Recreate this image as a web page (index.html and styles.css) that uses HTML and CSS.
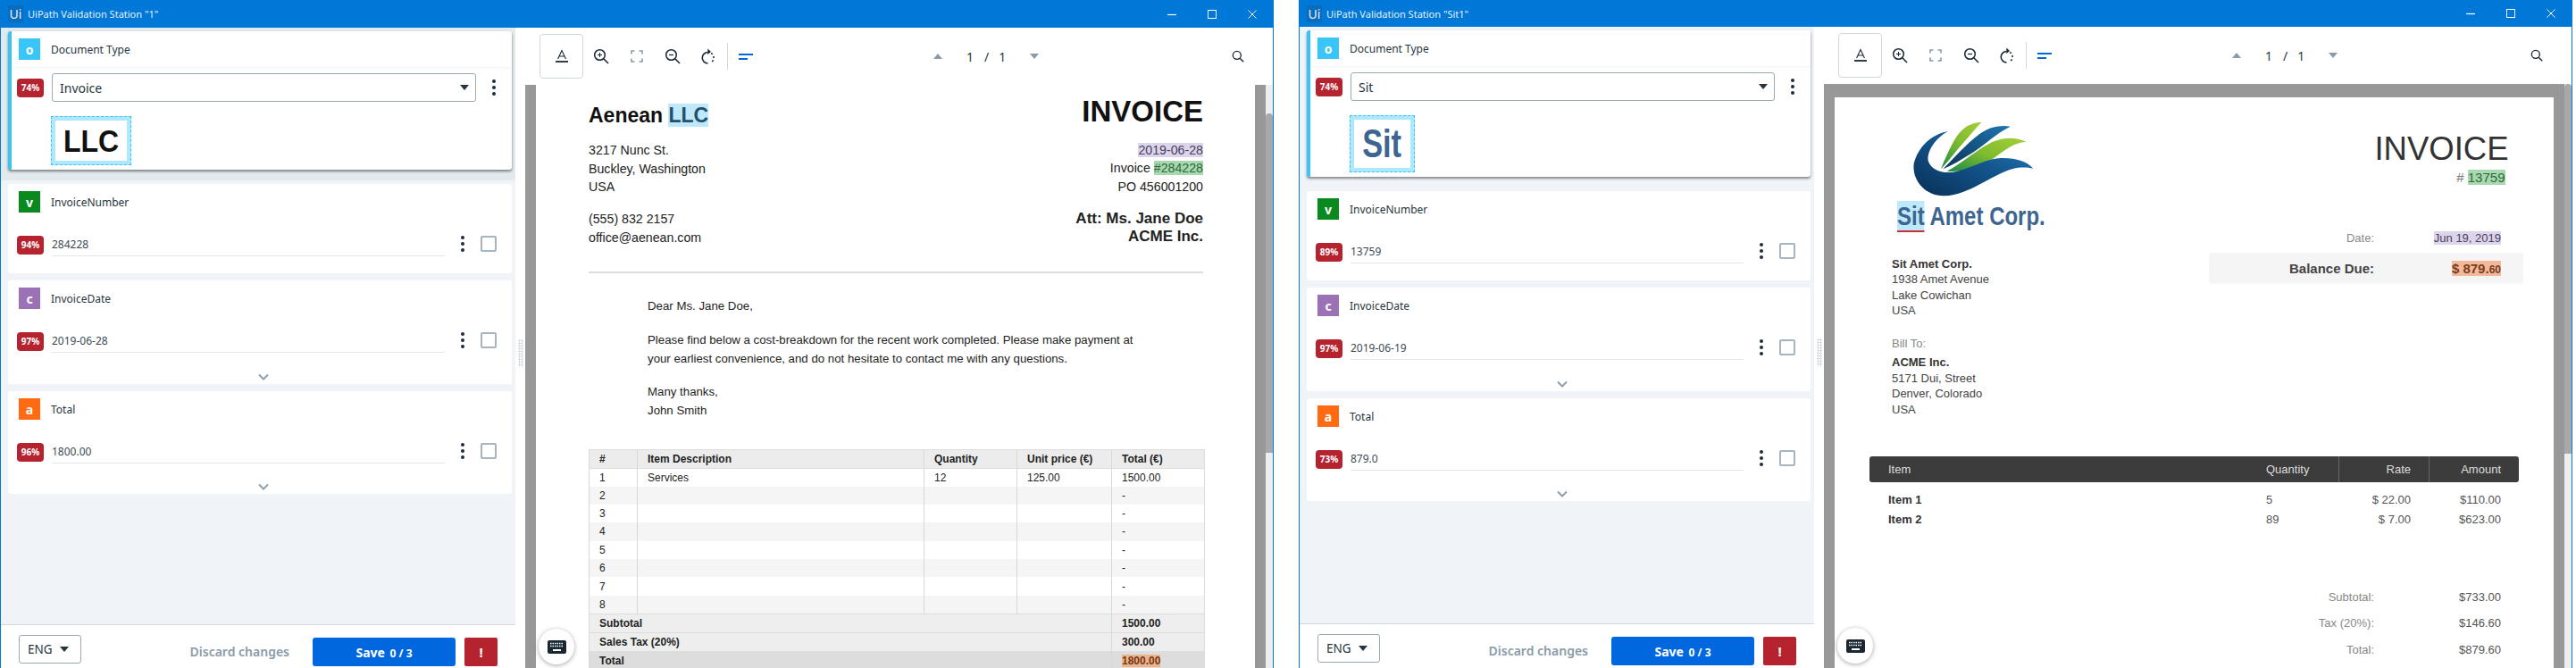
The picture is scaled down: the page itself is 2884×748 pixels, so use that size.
FILE: index.html
```html
<!DOCTYPE html>
<html lang="en">
<head>
<meta charset="utf-8">
<title>UiPath Validation Station</title>
<link rel="stylesheet" href="styles.css">
</head>
<body>
<svg class="defs" aria-hidden="true">
  <symbol id="i-a" viewBox="0 0 16 16"><path d="M3.6 11 8 1.5 12.4 11M5 8h6" fill="none" stroke="#1a2733" stroke-width="1.1"/><path d="M1 14h14" stroke="#1a2733" stroke-width="1.8"/></symbol>
  <symbol id="i-zoomin" viewBox="0 0 18 18"><circle cx="7.5" cy="7.5" r="5.8" fill="none" stroke="#1a2733" stroke-width="1.5"/><path d="M11.8 11.8 17 17" stroke="#1a2733" stroke-width="1.6"/><path d="M5 7.5h5M7.5 5v5" stroke="#1a2733" stroke-width="1"/></symbol>
  <symbol id="i-zoomout" viewBox="0 0 18 18"><circle cx="7.5" cy="7.5" r="5.8" fill="none" stroke="#1a2733" stroke-width="1.5"/><path d="M11.8 11.8 17 17" stroke="#1a2733" stroke-width="1.6"/><path d="M5 7.5h5" stroke="#1a2733" stroke-width="1.2"/></symbol>
  <symbol id="i-search" viewBox="0 0 18 18"><circle cx="7.5" cy="7.5" r="5.8" fill="none" stroke="#1a2733" stroke-width="1.7"/><path d="M11.8 11.8 17 17" stroke="#1a2733" stroke-width="1.8"/></symbol>
  <symbol id="i-fit" viewBox="0 0 14 14"><path d="M1 4.5V1h3.5M9.5 1H13v3.5M13 9.500V13H9.500M4.500 13H1V9.500" fill="none" stroke="#8a9ba8" stroke-width="1.6"/></symbol>
  <symbol id="i-rotate" viewBox="0 0 18 18"><path d="M8.500 4.500A6.200 6.200 0 0 0 8.500 17" fill="none" stroke="#1a2733" stroke-width="1.6"/><path d="M8.300 0.500 12 4 8.300 7z" fill="#1a2733"/><path d="M12.200 5.500A6.200 6.200 0 0 1 11.500 16.300" fill="none" stroke="#1a2733" stroke-width="1.6" stroke-dasharray="2 2.400"/></symbol>
  <symbol id="i-lines" viewBox="0 0 16 7"><path d="M0 1h16M0 6h10" stroke="#0067df" stroke-width="2"/></symbol>
  <symbol id="i-chev" viewBox="0 0 12 8"><path d="M1 1.500 6 6.500 11 1.500" fill="none" stroke="#8fa0ac" stroke-width="2"/></symbol>
  <symbol id="i-kbd" viewBox="0 0 21 15"><rect width="21" height="15" rx="2" fill="#1a2733"/><path d="M3 3.500h15M3 6.500h15" stroke="#fff" stroke-width="1.500" stroke-dasharray="1.500 1"/><path d="M6 11h9" stroke="#fff" stroke-width="2"/></symbol>
  <symbol id="i-min" viewBox="0 0 10 10"><path d="M0 5.500h10" stroke="#fff" stroke-width="1.200"/></symbol>
  <symbol id="i-max" viewBox="0 0 10 10"><rect x=".5" y=".5" width="9" height="9" fill="none" stroke="#fff"/></symbol>
  <symbol id="i-close" viewBox="0 0 10 10"><path d="M.5.500l9 9M9.500.500l-9 9" stroke="#fff"/></symbol>
</svg>

<div class="desktop">

<section class="win win-a">
  <header class="titlebar">
    <span class="ui-logo">Ui</span>
    <span class="win-title">UiPath Validation Station "1"</span>
    <span class="win-controls">
      <svg class="ctl"><use href="#i-min"/></svg>
      <svg class="ctl"><use href="#i-max"/></svg>
      <svg class="ctl"><use href="#i-close"/></svg>
    </span>
  </header>
  <div class="main">
    <aside class="panel">
      <div class="panel-scroll">
        <div class="active-zone">
          <div class="card card-active">
            <div class="field-head head-active"><span class="tag tag-o">o</span><span class="field-name">Document Type</span></div>
            <div class="active-body">
              <div class="select-row">
                <span class="badge">74%</span>
                <div class="select"><span>Invoice</span><i class="caret"></i></div>
                <span class="kebab-slot"><span class="kebab"><i></i><i></i><i></i></span></span>
              </div>
              <div class="crop crop-llc"><div class="crop-inner"><span class="llc">LLC</span></div></div>
            </div>
          </div>
        </div>
        <div class="cards">
          <div class="card card-plain">
            <div class="field-head"><span class="tag tag-v">v</span><span class="field-name">InvoiceNumber</span></div>
            <div class="field-row"><span class="badge">94%</span><span class="value">284228</span><span class="kebab-slot"><span class="kebab"><i></i><i></i><i></i></span></span><span class="check"></span></div>
          </div>
          <div class="card card-plain">
            <div class="field-head"><span class="tag tag-c">c</span><span class="field-name">InvoiceDate</span></div>
            <div class="field-row"><span class="badge">97%</span><span class="value">2019-06-28</span><span class="kebab-slot"><span class="kebab"><i></i><i></i><i></i></span></span><span class="check"></span></div>
            <svg class="chev"><use href="#i-chev"/></svg>
          </div>
          <div class="card card-plain">
            <div class="field-head"><span class="tag tag-a">a</span><span class="field-name">Total</span></div>
            <div class="field-row"><span class="badge">96%</span><span class="value">1800.00</span><span class="kebab-slot"><span class="kebab"><i></i><i></i><i></i></span></span><span class="check"></span></div>
            <svg class="chev"><use href="#i-chev"/></svg>
          </div>
        </div>
      </div>
      <footer class="panel-foot">
        <div class="lang"><span>ENG</span><i class="caret"></i></div>
        <span class="discard">Discard changes</span>
        <button class="save">Save <small>0 / 3</small></button>
        <button class="alert">!</button>
      </footer>
    </aside>
    <div class="handle"><i class="grip"></i></div>
    <div class="viewer">
      <div class="toolbar">
        <span class="tool-on"><svg class="ico-a"><use href="#i-a"/></svg></span>
        <span class="tool"><svg class="ico"><use href="#i-zoomin"/></svg></span>
        <span class="tool"><svg class="ico-fit"><use href="#i-fit"/></svg></span>
        <span class="tool"><svg class="ico"><use href="#i-zoomout"/></svg></span>
        <span class="tool"><svg class="ico"><use href="#i-rotate"/></svg></span>
        <i class="sep"></i>
        <svg class="ico-lines"><use href="#i-lines"/></svg>
        <div class="pager"><i class="arr-up"></i><span class="pg-a">1</span><span class="pg-b">/</span><span class="pg-c">1</span><i class="arr-down"></i></div>
        <svg class="ico-search"><use href="#i-search"/></svg>
      </div>
      <div class="docview">
        <div class="gutter">
          <article class="page page-acme">
            <div class="acme-top">
              <div>
                <div class="acme-name">Aenean <mark class="hl-blue">LLC</mark></div>
                <p class="acme-lines">3217 Nunc St.<br>Buckley, Washington<br>USA</p>
                <p class="acme-lines acme-gap">(555) 832 2157<br>office@aenean.com</p>
              </div>
              <div class="acme-right">
                <div class="acme-inv">INVOICE</div>
                <p class="acme-lines acme-gap-r"><mark class="hl-purple">2019-06-28</mark><br>Invoice <mark class="hl-green">#284228</mark><br>PO 456001200</p>
                <p class="acme-att">Att: Ms. Jane Doe<br>ACME Inc.</p>
              </div>
            </div>
            <hr class="acme-hr">
            <div class="letter">
              <p>Dear Ms. Jane Doe,</p>
              <p class="letter-b">Please find below a cost-breakdown for the recent work completed. Please make payment at<br>your earliest convenience, and do not hesitate to contact me with any questions.</p>
              <p class="letter-c">Many thanks,<br>John Smith</p>
            </div>
            <table class="acme-table">
              <colgroup><col class="c1"><col class="c2"><col class="c3"><col class="c4"><col class="c5"></colgroup>
              <thead><tr><th>#</th><th>Item Description</th><th>Quantity</th><th>Unit price (€)</th><th>Total (€)</th></tr></thead>
              <tbody>
                <tr><td>1</td><td>Services</td><td>12</td><td>125.00</td><td>1500.00</td></tr>
                <tr><td>2</td><td></td><td></td><td></td><td>-</td></tr>
                <tr><td>3</td><td></td><td></td><td></td><td>-</td></tr>
                <tr><td>4</td><td></td><td></td><td></td><td>-</td></tr>
                <tr><td>5</td><td></td><td></td><td></td><td>-</td></tr>
                <tr><td>6</td><td></td><td></td><td></td><td>-</td></tr>
                <tr><td>7</td><td></td><td></td><td></td><td>-</td></tr>
                <tr><td>8</td><td></td><td></td><td></td><td>-</td></tr>
              </tbody>
              <tfoot>
                <tr><th colspan="4">Subtotal</th><th>1500.00</th></tr>
                <tr><th colspan="4">Sales Tax (20%)</th><th>300.00</th></tr>
                <tr class="grand"><th colspan="4">Total</th><th><mark class="hl-orange">1800.00</mark></th></tr>
              </tfoot>
            </table>
          </article>
        </div>
        <div class="sbar"><i class="thumb thumb-a"></i></div>
        <button class="kbd"><svg class="kbd-ico"><use href="#i-kbd"/></svg></button>
      </div>
    </div>
  </div>
</section>

<section class="win win-b">
  <header class="titlebar">
    <span class="ui-logo">Ui</span>
    <span class="win-title">UiPath Validation Station "Sit1"</span>
    <span class="win-controls">
      <svg class="ctl"><use href="#i-min"/></svg>
      <svg class="ctl"><use href="#i-max"/></svg>
      <svg class="ctl"><use href="#i-close"/></svg>
    </span>
  </header>
  <div class="main">
    <aside class="panel">
      <div class="panel-scroll">
        <div class="active-zone">
          <div class="card card-active">
            <div class="field-head head-active"><span class="tag tag-o">o</span><span class="field-name">Document Type</span></div>
            <div class="active-body">
              <div class="select-row">
                <span class="badge">74%</span>
                <div class="select"><span>Sit</span><i class="caret"></i></div>
                <span class="kebab-slot"><span class="kebab"><i></i><i></i><i></i></span></span>
              </div>
              <div class="crop crop-sit"><div class="crop-inner"><span class="sit">Sit</span></div></div>
            </div>
          </div>
        </div>
        <div class="cards">
          <div class="card card-plain">
            <div class="field-head"><span class="tag tag-v">v</span><span class="field-name">InvoiceNumber</span></div>
            <div class="field-row"><span class="badge">89%</span><span class="value">13759</span><span class="kebab-slot"><span class="kebab"><i></i><i></i><i></i></span></span><span class="check"></span></div>
          </div>
          <div class="card card-plain">
            <div class="field-head"><span class="tag tag-c">c</span><span class="field-name">InvoiceDate</span></div>
            <div class="field-row"><span class="badge">97%</span><span class="value">2019-06-19</span><span class="kebab-slot"><span class="kebab"><i></i><i></i><i></i></span></span><span class="check"></span></div>
            <svg class="chev"><use href="#i-chev"/></svg>
          </div>
          <div class="card card-plain">
            <div class="field-head"><span class="tag tag-a">a</span><span class="field-name">Total</span></div>
            <div class="field-row"><span class="badge">73%</span><span class="value">879.0</span><span class="kebab-slot"><span class="kebab"><i></i><i></i><i></i></span></span><span class="check"></span></div>
            <svg class="chev"><use href="#i-chev"/></svg>
          </div>
        </div>
      </div>
      <footer class="panel-foot">
        <div class="lang"><span>ENG</span><i class="caret"></i></div>
        <span class="discard">Discard changes</span>
        <button class="save">Save <small>0 / 3</small></button>
        <button class="alert">!</button>
      </footer>
    </aside>
    <div class="handle"><i class="grip"></i></div>
    <div class="viewer">
      <div class="toolbar">
        <span class="tool-on"><svg class="ico-a"><use href="#i-a"/></svg></span>
        <span class="tool"><svg class="ico"><use href="#i-zoomin"/></svg></span>
        <span class="tool"><svg class="ico-fit"><use href="#i-fit"/></svg></span>
        <span class="tool"><svg class="ico"><use href="#i-zoomout"/></svg></span>
        <span class="tool"><svg class="ico"><use href="#i-rotate"/></svg></span>
        <i class="sep"></i>
        <svg class="ico-lines"><use href="#i-lines"/></svg>
        <div class="pager"><i class="arr-up"></i><span class="pg-a">1</span><span class="pg-b">/</span><span class="pg-c">1</span><i class="arr-down"></i></div>
        <svg class="ico-search"><use href="#i-search"/></svg>
      </div>
      <div class="docview">
        <div class="gutter gutter-b">
          <article class="page page-sit">
            <div class="sit-top">
              <div class="sit-left">
                <svg class="swoosh" viewBox="155 138 405 252">
                  <defs>
                    <linearGradient id="gBlue" x1="0" y1="1" x2="1" y2="0"><stop offset="0" stop-color="#082f55"/><stop offset=".55" stop-color="#14568f"/><stop offset="1" stop-color="#2184c2"/></linearGradient>
                    <linearGradient id="gGreen" x1="0" y1="1" x2="1" y2="0"><stop offset="0" stop-color="#1d8a4a"/><stop offset=".5" stop-color="#7fbb2e"/><stop offset="1" stop-color="#a5cf3a"/></linearGradient>
                    <linearGradient id="gMid" x1="0" y1="1" x2="1" y2="0"><stop offset="0" stop-color="#0b3358"/><stop offset="1" stop-color="#1f77b0"/></linearGradient>
                  </defs>
                  <path d="M385 140C345 142 320 160 300 190 280 222 262 262 248 298 275 270 300 235 325 208 345 185 365 160 385 140Z" fill="url(#gGreen)"/>
                  <path d="M482 155C440 148 405 160 375 182 335 212 290 262 255 298 300 278 345 250 380 225 415 198 445 172 482 155Z" fill="url(#gMid)"/>
                  <path d="M535 206C490 185 440 195 405 215 360 240 315 280 268 305 325 310 385 290 425 262 460 235 490 210 535 206Z" fill="url(#gGreen)"/>
                  <path d="M272 171C220 180 172 220 157 280 150 335 195 390 260 388 345 385 420 315 490 297 515 290 540 292 558 296 535 270 490 258 440 262 390 268 340 300 290 308 250 314 215 300 205 270 200 235 235 190 272 171Z" fill="url(#gBlue)"/>
                </svg>
                <div class="sit-brand"><mark class="sit-mark">Sit</mark> Amet Corp.</div>
                <p class="sit-addr"><b>Sit Amet Corp.</b><br>1938 Amet Avenue<br>Lake Cowichan<br>USA</p>
                <p class="sit-bill">Bill To:</p>
                <p class="sit-addr-2"><b>ACME Inc.</b><br>5171 Dui, Street<br>Denver, Colorado<br>USA</p>
              </div>
              <div class="sit-right">
                <div class="sit-inv">INVOICE</div>
                <div class="sit-num"># <mark class="hl-green">13759</mark></div>
                <div class="sit-date"><span class="s-label">Date:</span><span class="s-val"><mark class="hl-purple">Jun 19, 2019</mark></span></div>
                <div class="sit-bal"><b class="s-label">Balance Due:</b><b class="s-val"><mark class="hl-peach">$ 879.<small>60</small></mark></b></div>
              </div>
            </div>
            <div class="s-head"><span class="s-h1">Item</span><span>Quantity</span><span class="s-hr">Rate</span><span class="s-hr">Amount</span></div>
            <div class="s-row"><b class="s-c1">Item 1</b><span>5</span><span class="s-r">$ 22.00</span><span class="s-r">$110.00</span></div>
            <div class="s-row"><b class="s-c1">Item 2</b><span>89</span><span class="s-r">$ 7.00</span><span class="s-r">$623.00</span></div>
            <div class="s-tot s-tot-first"><span class="s-tl">Subtotal:</span><span class="s-tv">$733.00</span></div>
            <div class="s-tot"><span class="s-tl">Tax (20%):</span><span class="s-tv">$146.60</span></div>
            <div class="s-tot"><span class="s-tl">Total:</span><span class="s-tv">$879.60</span></div>
          </article>
        </div>
        <div class="sbar"><i class="thumb thumb-b"></i></div>
        <button class="kbd"><svg class="kbd-ico"><use href="#i-kbd"/></svg></button>
      </div>
    </div>
  </div>
</section>

</div>
</body>
</html>
```
FILE: styles.css
```css
* { box-sizing: border-box; }
html, body { margin: 0; height: 748px; overflow: hidden; background: #fff; }
body { font-family: "Noto Sans", sans-serif; color: #273540; }
p { margin: 0; }
mark { color: inherit; background: none; }
button { font-family: inherit; border: 0; padding: 0; }
.defs { display: none; }

.desktop { display: flex; gap: 28px; }
.win { width: 1426px; flex: none; border-left: 1px solid #0078d7; border-right: 1px solid #0078d7; }

/* title bar */
.titlebar { display: flex; align-items: center; background: #0078d7; color: #e4f1fb; font-size: 11px; }
.win-a .titlebar { height: 31px; }
.win-b .titlebar { height: 30px; }
.ui-logo { width: 17px; height: 19px; margin-left: 8px; background: #0a6cbd; color: #e8f3fc; font-size: 14px; line-height: 19px; text-align: center; }
.win-title { margin-left: 5px; }
.win-controls { margin-left: auto; margin-right: 18px; display: flex; gap: 35px; align-items: center; }
.ctl { width: 10px; height: 10px; display: block; }

.main { display: flex; height: 718px; }

/* left panel */
.panel { width: 576px; flex: none; display: flex; flex-direction: column; background: #f0f4f8; }
.panel-scroll { flex: 1; }
.active-zone { padding: 4px 4px 12px 8px; }
.win-a .active-zone { background: #e2eaee; }
.cards { padding: 4px 4px 0 8px; display: flex; flex-direction: column; gap: 8px; }
.card { background: #fff; border-radius: 3px; }
.card-active { border-left: 4px solid #38c6f9; box-shadow: 0 2px 3px rgba(0, 0, 0, .45); }
.card-plain { position: relative; height: 100px; }
.card-plain + .card-plain { height: 116px; }
.card-plain + .card-plain + .card-plain { height: 115px; }

.field-head { display: flex; align-items: center; height: 40px; padding-left: 12px; gap: 12px; }
.head-active { padding-left: 8px; box-shadow: 0 1px 2px rgba(0, 0, 0, .06); }
.tag { width: 24px; height: 24px; flex: none; color: #fff; font-size: 14px; font-weight: 700; line-height: 26px; text-align: center; }
.tag-o { background: #38c6f9; }
.tag-v { background: #0a8a1e; }
.tag-c { background: #9b72b5; }
.tag-a { background: #ff6a13; }
.field-name { font-size: 12px; color: #273540; }

.badge { width: 30px; height: 21px; flex: none; border-radius: 4px; background: #b5232f; color: #fff; font-size: 10px; font-weight: 700; line-height: 21px; text-align: center; }

.active-body { padding: 7px 0 5px 6px; }
.select-row { display: flex; align-items: center; gap: 9px; }
.select { flex: 1; height: 32px; display: flex; align-items: center; justify-content: space-between; padding: 0 7px 0 8px; border: 1px solid #9aaab5; border-radius: 3px; font-size: 14px; }
.select-row .kebab-slot { margin-left: -9px; }
.caret { display: block; width: 0; height: 0; border: 5px solid transparent; border-top: 6px solid #273540; border-bottom: 0; }
.kebab-slot { width: 40px; flex: none; display: flex; justify-content: center; }
.kebab { display: flex; flex-direction: column; gap: 3px; }
.kebab i { display: block; width: 4px; height: 4px; border-radius: 50%; background: #1a2d42; }

.crop { margin: 16px 0 0 38px; border: 1px dashed #38c6f9; padding: 4px; background: #aee8ff; }
.crop-llc { width: 90px; height: 55px; }
.crop-sit { width: 73px; height: 64px; }
.crop-inner { height: 100%; background: #fff; display: flex; align-items: center; justify-content: center; overflow: hidden; }
.llc { display: inline-block; font: 700 32px/1 "Liberation Sans", sans-serif; color: #111; transform: scaleY(1.1); }
.sit { display: inline-block; font: 700 44px/1 "Liberation Sans", sans-serif; color: #3d6590; transform: scaleX(.78); }

.field-row { display: flex; align-items: flex-start; margin-top: 18px; padding: 0 17px 0 10px; }
.value { flex: 1; height: 23px; margin-left: 9px; border-bottom: 1px solid #e3e8ec; font-size: 12px; line-height: 19px; color: #3c4a55; }
.check { width: 18px; height: 18px; flex: none; border: 2px solid #a5b4bf; border-radius: 2px; }
.chev { position: absolute; left: 280px; bottom: 4px; width: 12px; height: 8px; }

.panel-foot { height: 50px; flex: none; display: flex; align-items: flex-start; padding: 0 20px; background: #fff; border-top: 1px solid #cfd8dd; }
.lang { width: 70px; height: 32px; margin-top: 11px; display: flex; align-items: center; gap: 8px; padding-left: 9px; border: 1px solid #9aaab5; border-radius: 3px; font-size: 13.500px; }
.discard { margin: 14px 0 0 auto; font-size: 14px; font-weight: 600; line-height: 32px; color: #8a9ba8; }
.save { width: 160px; height: 32px; margin: 14px 0 0 26px; background: #0067df; border-radius: 3px; color: #fff; font-size: 14px; font-weight: 700; }
.save small { font-size: 12px; margin-left: 2px; }
.alert { width: 37px; height: 32px; margin: 14px 0 0 10px; background: #b5232f; border-radius: 2px; color: #fff; font-size: 15px; font-weight: 700; }

/* handle */
.handle { width: 11px; flex: none; display: flex; align-items: center; justify-content: center; background: #fff; }
.grip { width: 6px; height: 31px; margin-top: 10px; background-image: radial-gradient(#d8dee3 50%, transparent 52%); background-size: 3px 3px; }

/* viewer */
.viewer { flex: 1; min-width: 0; display: flex; flex-direction: column; }
.toolbar { height: 64px; flex: none; display: flex; align-items: center; padding: 0 32px 0 16px; background: #fff; }
.tool-on { width: 49px; height: 50px; display: flex; align-items: center; justify-content: center; border: 1px solid #cfd8dd; border-radius: 4px; }
.tool { width: 40px; display: flex; justify-content: center; }
.ico-a { width: 16px; height: 16px; }
.ico { width: 18px; height: 18px; display: block; }
.ico-fit { width: 14px; height: 14px; display: block; }
.sep { width: 1px; height: 30px; background: #cfd8dd; margin-left: 1px; }
.ico-lines { width: 16px; height: 7px; margin-left: 12px; }
.pager { display: flex; align-items: center; margin-left: 202px; font: 14px "Noto Sans", sans-serif; color: #273540; }
.arr-up, .arr-down { width: 0; height: 0; border: 5px solid transparent; }
.arr-up { border-bottom: 6px solid #8a9ba8; border-top: 0; }
.arr-down { border-top: 6px solid #8a9ba8; border-bottom: 0; }
.pg-a { margin-left: 27px; }
.pg-b { margin-left: 12px; }
.pg-c { margin-left: 11px; margin-right: 27px; }
.ico-search { width: 14px; height: 14px; margin-left: auto; }

.docview { flex: 1; min-height: 0; position: relative; display: flex; overflow: hidden; background: #989898; }
.gutter { width: 829px; flex: none; padding: 0 12px; }
.gutter-b { padding-top: 15px; }
.sbar { flex: 1; background: #eee; }
.thumb { display: block; width: 100%; height: 380px; background: #a8a8a8; border-radius: 4px 4px 0 0; }
.thumb-a { margin-top: 32px; }
.thumb-b { height: 414px; }
.kbd { position: absolute; left: 15px; bottom: 5px; width: 40px; height: 40px; border-radius: 50%; background: #fff; box-shadow: 0 1px 5px rgba(0, 0, 0, .35); display: flex; align-items: center; justify-content: center; }
.kbd-ico { width: 21px; height: 15px; }

.page { width: 805px; background: #fff; font-family: "Liberation Sans", Arial, sans-serif; min-height: 800px; }

/* first document */
.page-acme { padding: 10px 58px 0 59px; color: #222; }
.acme-top { display: flex; justify-content: space-between; }
.acme-name { margin-top: 10px; font-size: 23px; font-weight: 700; line-height: 28px; color: #111; }
.acme-lines { font-size: 14.200px; line-height: 20.700px; margin-top: 15px; }
.acme-gap { margin-top: 15px; }
.acme-right { text-align: right; }
.acme-inv { font-size: 33px; font-weight: 700; line-height: 40px; color: #111; }
.acme-gap-r { margin-top: 12.600px; }
.acme-att { margin-top: 15px; font-size: 17px; font-weight: 700; line-height: 20.700px; }
.acme-hr { margin: 27px 0 0; border: 0; border-top: 2px solid #ddd; }
.letter { margin: 27px 0 0 66px; font-size: 13.250px; line-height: 20.700px; }
.letter-b { margin-top: 18px; }
.letter-c { margin-top: 16.600px; }
.acme-table { margin-top: 32px; width: 689px; border-collapse: collapse; table-layout: fixed; font-size: 12px; border: 1px solid #ddd; }
.c1 { width: 54px; } .c2 { width: 321px; } .c3 { width: 104px; } .c4 { width: 106px; } .c5 { width: 104px; }
.acme-table th, .acme-table td { padding: 0 0 0 11px; text-align: left; border-left: 1px solid #d8d8d8; }
.acme-table thead th { height: 21px; background: #ececec; border-bottom: 1px solid #ddd; }
.acme-table td { height: 20.400px; }
.acme-table tbody tr:nth-child(even) td { background: #f5f5f5; }
.acme-table tfoot th { height: 21px; background: #eee; border-top: 1px solid #ddd; }
.acme-table tfoot .grand th { background: #ddd; }

/* second document */
.page-sit { padding: 27px 39px 0; color: #444; font-size: 13px; }
.sit-top { display: flex; justify-content: space-between; }
.sit-left { margin-left: 25px; }
.swoosh { display: block; width: 135px; height: 84px; margin-left: 24px; }
.sit-brand { width: 210px; margin: 10px 0 0 6px; font: 700 30px/24px "Liberation Sans", sans-serif; color: #3d6590; white-space: nowrap; transform: scaleX(.8); transform-origin: 0 50%; }
.sit-mark { background: #bde9fb; border-bottom: 2px solid #c5303a; }
.sit-addr { margin-top: 33px; line-height: 17.400px; }
.sit-addr b, .sit-addr-2 b { color: #333; }
.sit-bill { margin-top: 19.400px; line-height: 17.400px; color: #888; }
.sit-addr-2 { margin-top: 4px; line-height: 17.400px; }
.sit-right { width: 352px; margin: 10.500px -5px 0 0; }
.sit-inv { padding-right: 16.500px; font-size: 36.500px; line-height: 40px; color: #333; text-align: right; }
.sit-num { margin-top: 2.500px; padding-right: 20.500px; font-size: 15px; line-height: 20px; color: #777; text-align: right; }
.sit-date { display: flex; margin-top: 49px; line-height: 18px; }
.sit-date .s-label { color: #888; }
.s-label { width: 185px; text-align: right; }
.s-val { flex: 1; padding-right: 25px; text-align: right; }
.sit-bal { display: flex; align-items: center; height: 34px; margin-top: 7px; background: #f5f5f5; border-radius: 3px; font-size: 15px; box-shadow: 0 1px 1px rgba(0, 0, 0, .03); }
.sit-bal small { font-size: 12px; }

.s-head { display: grid; grid-template-columns: 444px 81px 101px 1fr; height: 29px; margin-top: 43.600px; background: #3c3c3c; border-radius: 3px; color: #ddd; line-height: 29px; }
.s-h1 { padding-left: 21px; }
.s-hr { border-left: 1px solid #666; padding-right: 20px; text-align: right; }
.s-row { display: grid; grid-template-columns: 444px 81px 101px 1fr; height: 22px; line-height: 22px; color: #555; }
.s-head + .s-row { margin-top: 9px; }
.s-row b { color: #333; }
.s-c1 { padding-left: 21px; }
.s-r { padding-right: 20px; text-align: right; }
.s-tot { display: flex; height: 29.500px; line-height: 29.500px; }
.s-tot-first { margin-top: 61px; }
.s-tl { width: 565px; text-align: right; color: #888; }
.s-tv { flex: 1; padding-right: 20px; text-align: right; color: #555; }

.hl-blue { background: #bfe9fb; color: #23506b; }
.hl-purple { background: #dcd4ea; color: #4a4060; }
.hl-green { background: #a9d7b0; color: #2a6b3a; }
.hl-orange { background: #e8b58f; color: #7a3410; }
.hl-peach { background: #f2b99a; color: #7a3c1c; }
```
